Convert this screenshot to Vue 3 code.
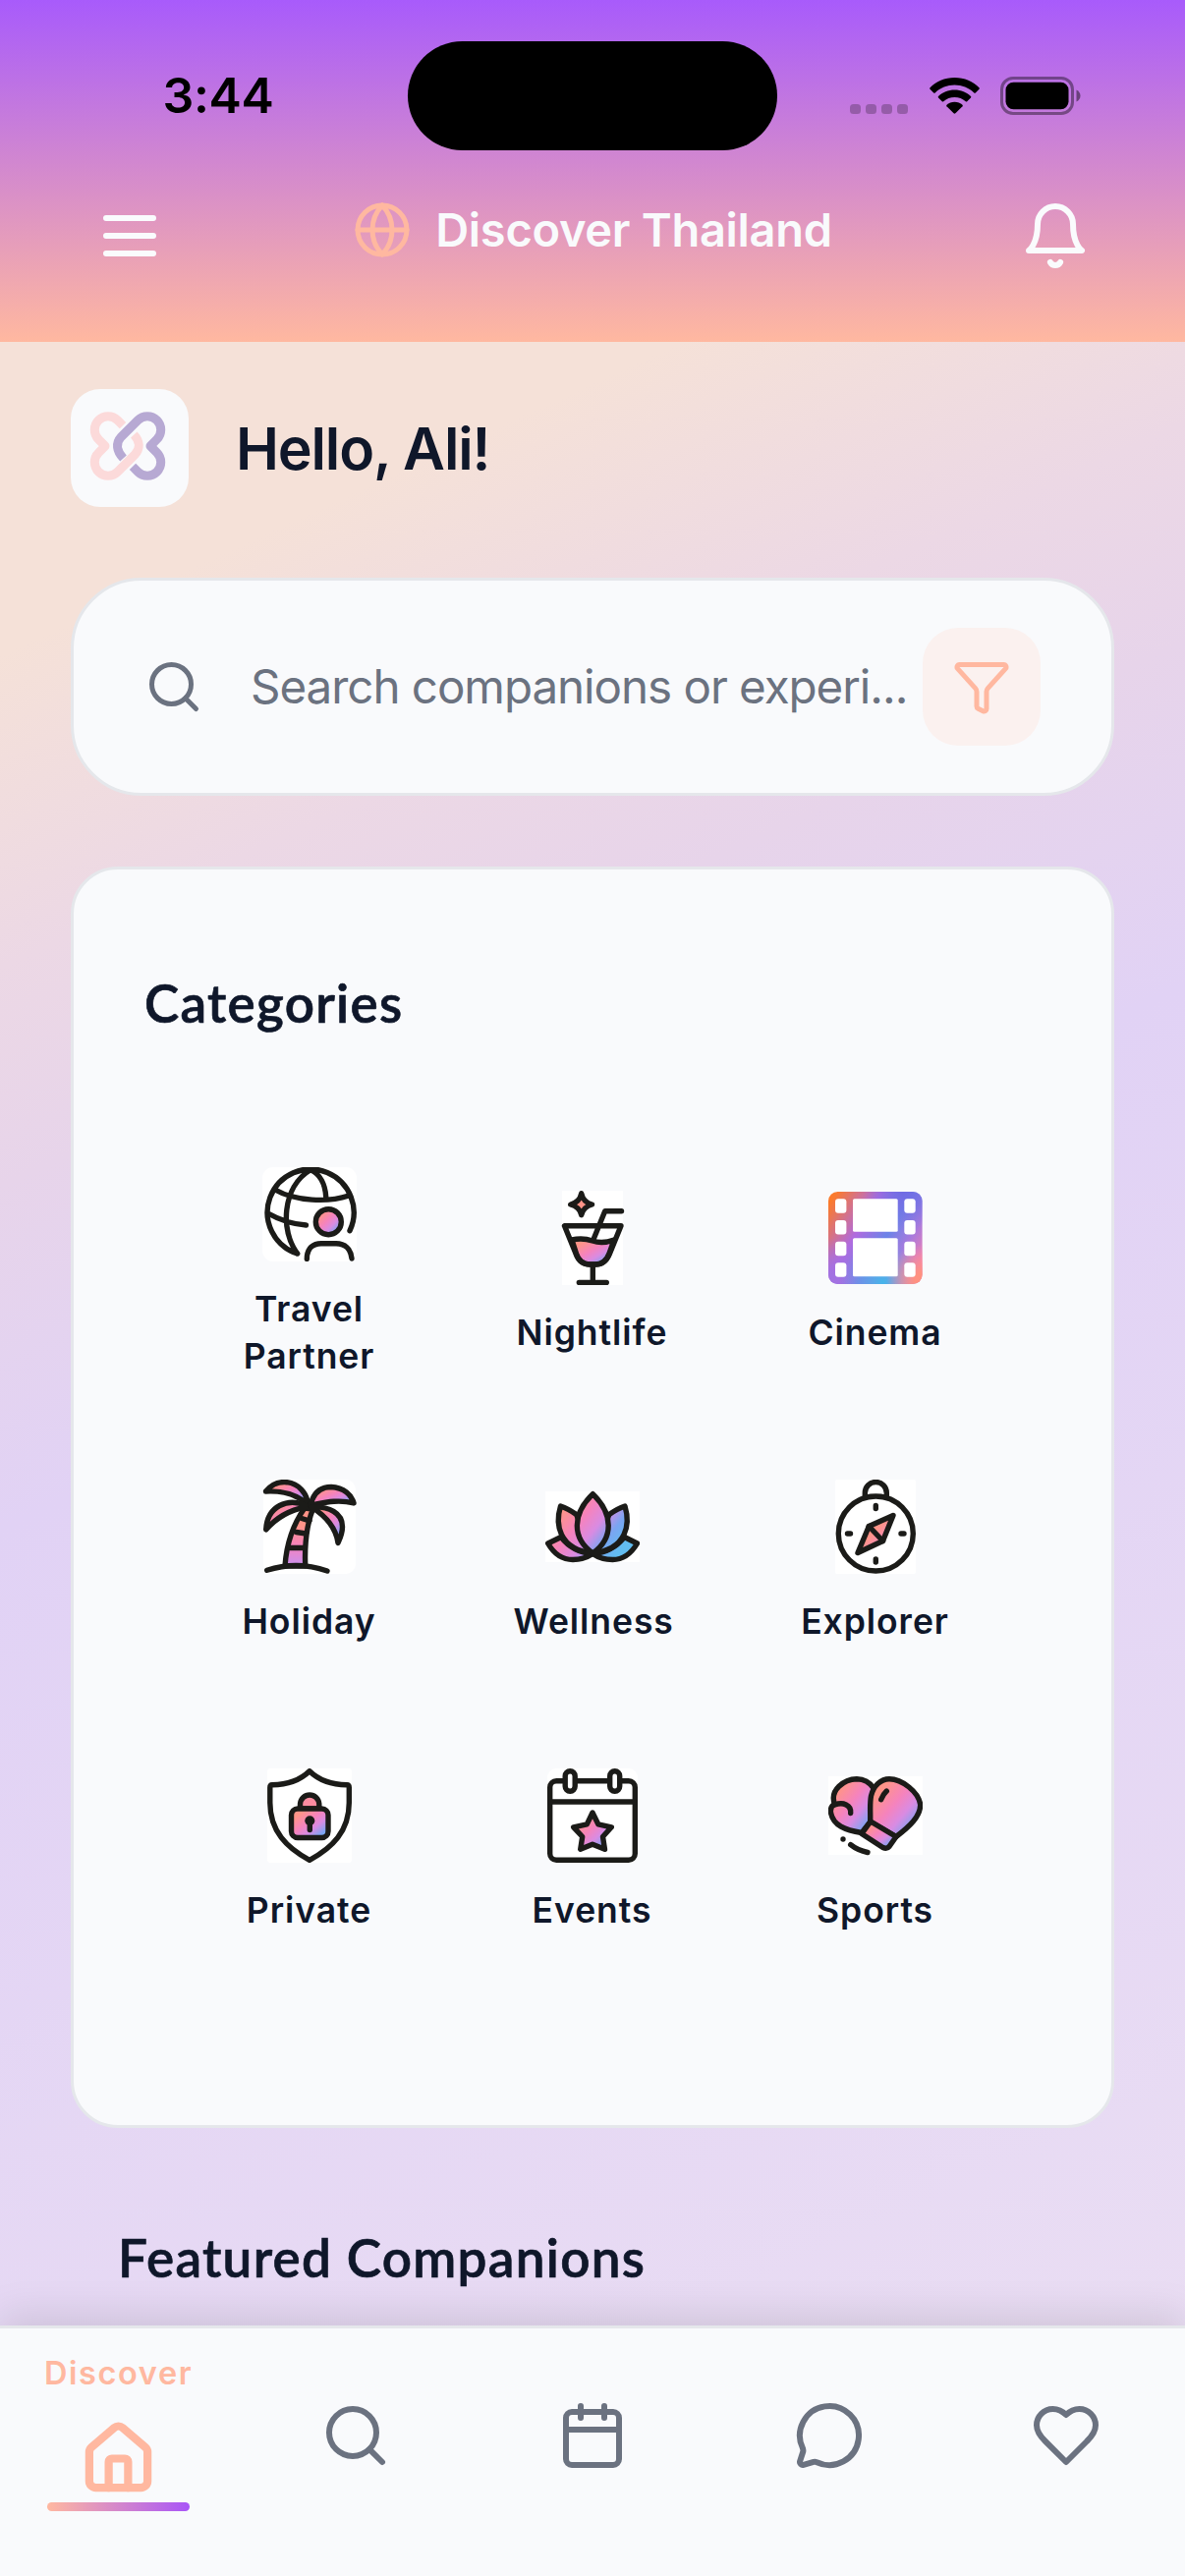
<script setup>
const categories = [
  { id: 'travel', label: 'Travel Partner' },
  { id: 'nightlife', label: 'Nightlife' },
  { id: 'cinema', label: 'Cinema' },
  { id: 'holiday', label: 'Holiday' },
  { id: 'wellness', label: 'Wellness' },
  { id: 'explorer', label: 'Explorer' },
  { id: 'private', label: 'Private' },
  { id: 'events', label: 'Events' },
  { id: 'sports', label: 'Sports' },
]
</script>

<template>
  <div class="screen">
    <header class="header">
      <div class="status">
        <span class="time">3:44</span>
        <div class="island"></div>
        <div class="indicators">
          <div class="dots"><i></i><i></i><i></i><i></i></div>
          <svg class="wifi" viewBox="0 0 51 37">
            <path d="M25.500 0C35.500 0 44.500 3.900 50.500 10.200Q51.200 11 50.500 11.700L46.800 15.400Q46 16 45.300 15.400C40 10.400 33 7.600 25.500 7.600S11 10.400 5.700 15.400Q5 16 4.200 15.400L.5 11.700Q-.2 11 .5 10.200C6.500 3.900 15.500 0 25.500 0Z" />
            <path d="M25.500 12.500C32 12.500 37.800 15 42 19Q42.700 19.800 42 20.500L38.200 24.200Q37.500 24.800 36.800 24.200C33.700 21.500 29.800 20 25.500 20S17.300 21.500 14.200 24.200Q13.500 24.800 12.800 24.200L9 20.500Q8.300 19.800 9 19C13.200 15 19 12.500 25.500 12.500Z" />
            <path d="M25.500 24.800C28.600 24.800 31.400 26 33.500 27.800Q34.200 28.600 33.500 29.300L26.400 36.300Q25.500 37 24.600 36.300L17.500 29.300Q16.800 28.600 17.500 27.800C19.600 26 22.400 24.800 25.500 24.800Z" />
          </svg>
          <svg class="battery" viewBox="0 0 82 39">
            <rect x="1.500" y="1.500" width="72" height="36" rx="11.500" fill="none" stroke="#000" stroke-opacity=".4" stroke-width="3" />
            <rect x="5.500" y="5.700" width="64" height="27.600" rx="8" />
            <path d="M77.500 13.500C80 14.600 81.500 16.800 81.500 19.500S80 24.400 77.500 25.500Z" fill-opacity=".45" />
          </svg>
        </div>
      </div>
      <div class="topbar">
        <svg class="ic72 light" viewBox="0 0 24 24"><path d="M4 6h16M4 12h16M4 18h16" /></svg>
        <div class="title">
          <svg class="ic60 coral" viewBox="0 0 24 24"><circle cx="12" cy="12" r="10" /><path d="M12 2a14.500 14.500 0 0 0 0 20 14.500 14.500 0 0 0 0-20M2 12h20" /></svg>
          <span>Discover Thailand</span>
        </div>
        <svg class="ic72 light" viewBox="0 0 24 24"><path d="M6 8a6 6 0 0 1 12 0c0 7 3 9 3 9H3s3-2 3-9M10.300 21a1.940 1.940 0 0 0 3.400 0" /></svg>
      </div>
    </header>

    <main class="main">
      <div class="greeting">
        <div class="logo">
          <svg viewBox="0 0 120 120" fill="none" stroke-width="9" stroke-linejoin="round">
            <path stroke="#fcdada" d="M53 37.100L47.700 31.800A13.700 13.700 0 0 0 28.300 51.200L35 58L28.300 64.800A13.700 13.700 0 0 0 47.700 84.200L65 67C71 61 70.500 53 64.300 46.500" />
            <path stroke="#b7a9d3" d="M63 78.900L68.300 84.200A13.700 13.700 0 0 0 87.700 64.800L81 58L87.700 51.200A13.700 13.700 0 0 0 68.300 31.800L51 49C45.500 55 46.500 63 53.500 70.500" />
          </svg>
        </div>
        <h1>Hello, Ali!</h1>
      </div>

      <div class="search">
        <svg class="ic60 grey" viewBox="0 0 24 24"><circle cx="11" cy="11" r="8" /><path d="m21 21-4.300-4.300" /></svg>
        <span class="placeholder">Search companions or experi...</span>
        <div class="filter">
          <svg class="ic60 coral" viewBox="0 0 24 24"><path d="M10 20a1 1 0 0 0 .553.895l2 1A1 1 0 0 0 14 21v-7a2 2 0 0 1 .517-1.341L21.740 4.670A1 1 0 0 0 21 3H3a1 1 0 0 0-.742 1.670l7.225 7.989A2 2 0 0 1 10 14z" /></svg>
        </div>
      </div>

      <section class="card">
        <h2>Categories</h2>
        <div class="grid">
          <div v-for="c in categories" :key="c.id" class="cell">
            <svg class="art" viewBox="0 0 96 96">
              <defs>
                <linearGradient :id="'g-' + c.id" x1="0" y1="0" x2="1" y2="1">
                  <stop offset=".2" stop-color="#ff9488" />
                  <stop offset=".46" stop-color="#f583bd" />
                  <stop offset=".64" stop-color="#d98be2" />
                  <stop offset=".85" stop-color="#7aa5f2" />
                </linearGradient>
              </defs>

              <g v-if="c.id === 'travel'">
                <rect class="paper" width="96" height="96" rx="11" />
                <path d="M89 64.700A44 44 0 1 0 35.700 88M49 2.700C20 20 18 65 35.700 88M49 2.700C59 7 64 18 64.700 30M13 23C34 35 67 36 88 29M5.700 47C18 54 30 58 44.500 59" />
                <circle cx="67.300" cy="55.700" r="13" fill="url(#g-travel)" />
                <path d="M45.300 93.500C45.300 82 52 77.700 60 77.700H75C84 77.700 90 83 91 93" />
              </g>

              <g v-else-if="c.id === 'nightlife'">
                <rect class="paper" x="17" width="62" height="96" />
                <path d="M36.700 2.700Q38.500 11.500 47.500 14Q38.500 16.500 36.700 24.700Q35 16.500 25.700 14Q35 11.500 36.700 2.700Z" fill="#ff9488" />
                <path d="M27 50Q38 47.500 48 51T70 50L65 64Q61 75 51 75H45.500Q35 75 31.500 64Z" fill="url(#g-nightlife)" />
                <path d="M19.500 35.700H77L65.500 64Q61 75 51 75H45.500Q35 75 31 64ZM77.500 20.700H60.700L49 49.500M48.300 75V93.500M34.300 93.500H62.300" />
              </g>

              <g v-else-if="c.id === 'cinema'">
                <defs>
                  <linearGradient id="film" x1="0" y1=".15" x2="1" y2=".75">
                    <stop offset="0" stop-color="#fb7a2c" />
                    <stop offset=".35" stop-color="#b06bdf" />
                    <stop offset=".6" stop-color="#6b83e8" />
                    <stop offset=".8" stop-color="#a87add" />
                    <stop offset="1" stop-color="#f080b4" />
                  </linearGradient>
                  <radialGradient id="film-sky" cx="0.580" cy=".98" r=".45">
                    <stop offset="0" stop-color="#45b5ea" /><stop offset="1" stop-color="#5aa5ea" stop-opacity="0" />
                  </radialGradient>
                  <radialGradient id="film-coral" cx="1" cy=".95" r=".38">
                    <stop offset=".2" stop-color="#ff9180" /><stop offset="1" stop-color="#ff8fa0" stop-opacity="0" />
                  </radialGradient>
                  <radialGradient id="film-violet" cx="0" cy="1" r=".5">
                    <stop offset=".2" stop-color="#a372e2" /><stop offset="1" stop-color="#a372e2" stop-opacity="0" />
                  </radialGradient>
                  <radialGradient id="film-indigo" cx=".8" cy="0" r=".42">
                    <stop offset="0" stop-color="#6f6be4" /><stop offset="1" stop-color="#7b6ce2" stop-opacity="0" />
                  </radialGradient>
                </defs>
                <rect v-for="f in ['film', 'film-violet', 'film-sky', 'film-indigo', 'film-coral']" :key="f" class="flat" y="1" width="95.600" height="94" rx="9.500" :fill="`url(#${f})`" />
                <rect v-for="y in [8.300, 30, 51.700, 73.300]" :key="'l' + y" class="paper" x="7" :y="y" width="11.400" height="14.500" rx="3" />
                <rect v-for="y in [8.300, 30, 51.700, 73.300]" :key="'r' + y" class="paper" x="77.300" :y="y" width="11.400" height="14.500" rx="3" />
                <rect class="paper" x="25" y="8.300" width="45.700" height="33.400" rx="1.500" />
                <rect class="paper" x="25" y="48.300" width="45.700" height="39" rx="1.500" />
              </g>

              <g v-else-if="c.id === 'holiday'">
                <defs>
                  <linearGradient id="trunk" x1="0" y1="0" x2="0" y2="1">
                    <stop offset=".3" stop-color="#ff9488" />
                    <stop offset=".65" stop-color="#f583bd" />
                    <stop offset=".95" stop-color="#cf8fe8" />
                  </linearGradient>
                </defs>
                <rect class="paper" x="1" width="94" height="96" rx="10" />
                <path d="M23 88C24.500 66 31 46 43 29L51.500 30C45 46 43 68 43.700 88Z" fill="url(#trunk)" />
                <g fill="url(#g-holiday)">
                  <path d="M3.500 12C10 4 18 2 25 2.700C37 4.500 45 13 46.500 25C36 16 22 11 3.500 12Z" />
                  <path d="M44 26C26 19 5 26 3.700 51C14 39 28 31 44 28Z" />
                  <path d="M49 26C52 13 60 7.500 70 7.500C83 8 91 16 93 24C78 20 65 23 49 26Z" />
                  <path d="M50 28C68 27 81.500 34 81.500 48C81.500 55 79 60 77 64.500C75 50 66 38 50 28Z" />
                </g>
                <path d="M40 39.500L48 42M34.500 53.500L44.500 55M28 69.500H43M4.700 92.300C24 86 46 86 66 93" />
              </g>

              <g v-else-if="c.id === 'wellness'">
                <defs>
                  <linearGradient id="lotus" gradientUnits="userSpaceOnUse" x1="20" y1="28" x2="76" y2="72">
                    <stop offset="0" stop-color="#ff9488" />
                    <stop offset=".3" stop-color="#f583bd" />
                    <stop offset=".53" stop-color="#d98be2" />
                    <stop offset=".75" stop-color="#7aa5f2" />
                    <stop offset="1" stop-color="#62bdf0" />
                  </linearGradient>
                </defs>
                <rect class="paper" y="12" width="96" height="72" />
                <g fill="url(#lotus)">
                  <path d="M16 58.500L2.700 65C9 76 18 81.500 28 81.500Q39 81.500 48.300 75.500Q28 74 16 58.500Z" />
                  <path d="M80.500 58.500L93.500 65C87 76 78.500 81.500 68.500 81.500Q57 81.500 48.300 75.500Q68 74 80.500 58.500Z" />
                  <path d="M31.500 35.500Q23 29.500 15.500 27C10 45 13 71 48.300 75Z" />
                  <path d="M65 35.500Q73.500 29.500 81 27C86.500 45 83.500 71 48.300 75Z" />
                  <path d="M48.300 14.700C27 35 27 60 48.300 75C69.500 60 69.500 35 48.300 14.700Z" />
                </g>
              </g>

              <g v-else-if="c.id === 'explorer'">
                <defs>
                  <linearGradient id="needle" x1="0.300" y1=".3" x2=".8" y2=".8">
                    <stop offset=".3" stop-color="#ff9488" />
                    <stop offset="1" stop-color="#ee86d0" />
                  </linearGradient>
                </defs>
                <rect class="paper" x="7" width="82" height="96" rx="2" />
                <circle cx="48.300" cy="55" r="38" />
                <path d="M37.300 17V13.500A11 11 0 0 1 59.300 13.500V17M48.300 26.500V29.500M48.300 81V84M19.500 55H22.500M74 55H77" />
                <path d="M66 36.500L41.300 47.500L30 74.500L55.500 62.500Z" fill="url(#needle)" />
                <path d="M41.300 47.500L55.500 62.500" />
              </g>

              <g v-else-if="c.id === 'private'">
                <rect class="paper" x="5" width="86" height="96" rx="3" />
                <path d="M48 2.800C38 12.500 25 16.700 10 16.700Q7.800 16.700 7.800 19.500V35C7.800 64 25 81 48 93.300C71 81 88.300 64 88.300 35V19.500Q88.300 16.700 86 16.700C71 16.700 58 12.500 48 2.800Z" />
                <path d="M38.500 41V36A9.700 10 0 0 1 57.800 36V41Z" fill="#fb8ba0" />
                <rect x="29.500" y="41" width="37.500" height="29.500" rx="6.500" fill="url(#g-private)" />
                <circle class="ink" cx="48.300" cy="53.300" r="5" />
                <path d="M48.300 54V62.500" />
              </g>

              <g v-else-if="c.id === 'events'">
                <rect class="paper" x="2" width="92" height="96" rx="9" />
                <rect x="4.700" y="12.800" width="86.600" height="80.500" rx="6.500" />
                <path d="M5 34H91" />
                <rect class="paper inked" x="20.200" y="2.800" width="10" height="20.500" rx="5" />
                <rect class="paper inked" x="65.700" y="2.800" width="10" height="20.500" rx="5" />
                <path d="M48 45L53.800 56.800L67.300 59.800L58.500 69.500L60.500 82.300L48 77.300L35.700 82.300L37.700 69.500L28.700 59.800L42.300 56.800Z" fill="url(#g-events)" />
              </g>

              <g v-else>
                <rect class="paper" y="8" width="96" height="80" />
                <path d="M46 20C42 14 36 10.700 29 10.700C16 11 1 22 6.500 36.500C3 38 2 41 2.500 45C5 58 17 63 34 65.500L43 54Z" fill="url(#g-sports)" />
                <path d="M6.500 37C15 34 23.500 37 22.700 45.500" />
                <path d="M42.700 54C43 45 42 36 43.500 28C46 17 54 10.700 62 10.700C75 10.700 92 24 93.700 37C93.500 49 83 59 69 69.500Z" fill="url(#g-sports)" />
                <path d="M43 54L69 69.500L62 79.500Q59.500 82.500 55.500 80.500L34 66.500Z" fill="url(#g-sports)" />
                <path d="M59.300 23Q55.500 26.500 53.700 31.700M22.700 77.700Q30 83.500 40 85.500" />
                <circle class="ink" cx="15" cy="72" r="2.700" />
              </g>
            </svg>
            <span class="label">{{ c.label }}</span>
          </div>
        </div>
      </section>

      <h2 class="featured">Featured Companions</h2>
    </main>

    <nav class="nav">
      <div class="tab active">
        <span>Discover</span>
        <svg class="home" viewBox="0 0 24 24"><path d="M15 21v-8a1 1 0 0 0-1-1h-4a1 1 0 0 0-1 1v8" /><path d="M3 10a2 2 0 0 1 .709-1.528l7-5.999a2 2 0 0 1 2.582 0l7 5.999A2 2 0 0 1 21 10v9a2 2 0 0 1-2 2H5a2 2 0 0 1-2-2z" /></svg>
        <div class="bar"></div>
      </div>
      <div class="tab"><svg class="ic72 grey" viewBox="0 0 24 24"><circle cx="11" cy="11" r="8" /><path d="m21 21-4.300-4.300" /></svg></div>
      <div class="tab"><svg class="ic72 grey" viewBox="0 0 24 24"><path d="M8 2v4M16 2v4M3 10h18" /><rect x="3" y="4" width="18" height="18" rx="2" /></svg></div>
      <div class="tab"><svg class="ic72 grey" viewBox="0 0 24 24"><path d="M2.992 16.342a2 2 0 0 1 .094 1.167l-1.065 3.290a1 1 0 0 0 1.236 1.168l3.413-.998a2 2 0 0 1 1.099.092 10 10 0 1 0-4.777-4.719" /></svg></div>
      <div class="tab"><svg class="ic72 grey" viewBox="0 0 24 24"><path d="M19 14c1.490-1.460 3-3.210 3-5.500A5.500 5.500 0 0 0 16.500 3c-1.760 0-3 .5-4.500 2-1.500-1.500-2.740-2-4.500-2A5.500 5.500 0 0 0 2 8.500c0 2.300 1.500 4.050 3 5.500l7 7Z" /></svg></div>
    </nav>
  </div>
</template>

<style>
body { margin: 0; }
</style>

<style scoped>
.screen {
  width: 1206px;
  height: 2622px;
  display: flex;
  flex-direction: column;
  overflow: hidden;
  font-family: Inter, "Liberation Sans", sans-serif;
  color: #0f172a;
  background: linear-gradient(155.300deg, #f5e1d8 21%, #ecd8e5 31%, #e7d4ea 38%, #e1d2f5 49%, #ebdff3 100%);
}
.header {
  height: 348px;
  flex: none;
  background: linear-gradient(180deg, #a85bfb, #ffb8a0);
}
.status {
  height: 194px;
  display: grid;
  grid-template-columns: 415px 376px 1fr;
  align-items: center;
}
.time {
  padding-left: 29px;
  text-align: center;
  font-size: 50px;
  font-weight: 600;
  letter-spacing: -.3px;
  color: #000;
}
.island { height: 111px; border-radius: 56px; background: #000; }
.indicators { display: flex; align-items: center; padding-left: 74px; }
.dots { display: flex; gap: 5.500px; margin: 27px 22px 0 0; }
.dots i { width: 10.500px; height: 10px; border-radius: 3.500px; background: rgba(0, 0, 0, .24); }
.wifi { width: 51px; height: 37px; }
.battery { width: 82px; height: 39px; margin-left: 21px; }
.topbar { display: flex; justify-content: space-between; padding: 10px 96px 0; }
.title {
  display: flex;
  height: 60px;
  align-items: center;
  gap: 24px;
  color: #f9fafc;
  font-size: 47px;
  font-weight: 600;
  letter-spacing: -.3px;
  white-space: nowrap;
}
.title span { padding-bottom: 2px; }
.ic60, .ic72, .home {
  flex: none;
  fill: none;
  stroke: currentColor;
  stroke-width: 2;
  stroke-linecap: round;
  stroke-linejoin: round;
}
.ic60 { width: 60px; height: 60px; }
.ic72 { width: 72px; height: 72px; }
.light { color: #fafbfd; }
.coral { color: #ffb8a0; }
.grey { color: #6b7280; }

.main { flex: 1; min-height: 0; overflow: hidden; padding: 48px 72px 0; }
.greeting { display: flex; align-items: center; gap: 48px; }
.logo { width: 120px; height: 120px; border-radius: 30px; background: #f9fafc; }
.logo svg { display: block; }
h1 { margin: 0; font-size: 59px; font-weight: 600; letter-spacing: -1.150px; }
.search {
  box-sizing: border-box;
  height: 222px;
  margin-top: 72px;
  padding: 0 72px;
  display: flex;
  align-items: center;
  border: 3px solid #e5e7eb;
  border-radius: 72px;
  background: #f9fafc;
}
.placeholder {
  flex: 1;
  margin-left: 48px;
  padding-bottom: 2px;
  white-space: nowrap;
  font-size: 47.500px;
  color: #6b7280;
  letter-spacing: -1.030px;
}
.filter {
  width: 120px;
  height: 120px;
  border-radius: 36px;
  background: #fbf1ef;
  display: grid;
  place-items: center;
}
.card {
  box-sizing: border-box;
  height: 1284px;
  margin-top: 72px;
  padding: 95px 72px 0;
  border: 3px solid #e5e7eb;
  border-radius: 48px;
  background: #f9fafc;
}
h2 {
  margin: 0;
  font-family: Lato, sans-serif;
  font-size: 53px;
  line-height: 82px;
  font-weight: 600;
  letter-spacing: 1.300px;
  -webkit-text-stroke: .7px #0f172a;
}
.grid {
  width: 864px;
  margin: 87px auto 0;
  display: grid;
  grid-template-columns: repeat(3, 1fr);
  grid-auto-rows: 294px;
}
.cell {
  display: flex;
  flex-direction: column;
  align-items: center;
  justify-content: center;
  gap: 24px;
}
.art { width: 96px; height: 96px; }
.art g {
  stroke: #1b1b18;
  stroke-width: 5.400;
  stroke-linecap: round;
  stroke-linejoin: round;
}
.art > g { fill: none; }
.art .paper { fill: #fff; stroke: none; }
.art .inked { stroke: #1b1b18; }
.art .flat { stroke: none; }
.art .ink { fill: #1b1b18; stroke: none; }
.label {
  position: relative;
  top: 1px;
  max-width: 160px;
  padding-right: 1px;
  text-align: center;
  font-size: 35.500px;
  line-height: 48px;
  font-weight: 600;
  letter-spacing: .95px;
}
.featured { margin: 91px 0 0 48px; }

.nav {
  box-sizing: border-box;
  position: relative;
  height: 255px;
  flex: none;
  display: flex;
  border-top: 3px solid #e5e7eb;
  background: #f9fafc;
  box-shadow: 0 -12px 36px rgba(0, 0, 0, .1);
}
.tab {
  flex: 1;
  display: flex;
  flex-direction: column;
  align-items: center;
  padding-top: 73px;
}
.active { padding-top: 26px; color: #ffb8a0; }
.active span { font-size: 32.500px; line-height: 40px; font-weight: 600; letter-spacing: 1.600px; }
.home { width: 79px; height: 79px; margin-top: 27px; stroke-width: 2.500; }
.bar {
  width: 145px;
  height: 9px;
  margin-top: 5px;
  border-radius: 5px;
  background: linear-gradient(90deg, #ffb8a0, #a855f7);
}
</style>
